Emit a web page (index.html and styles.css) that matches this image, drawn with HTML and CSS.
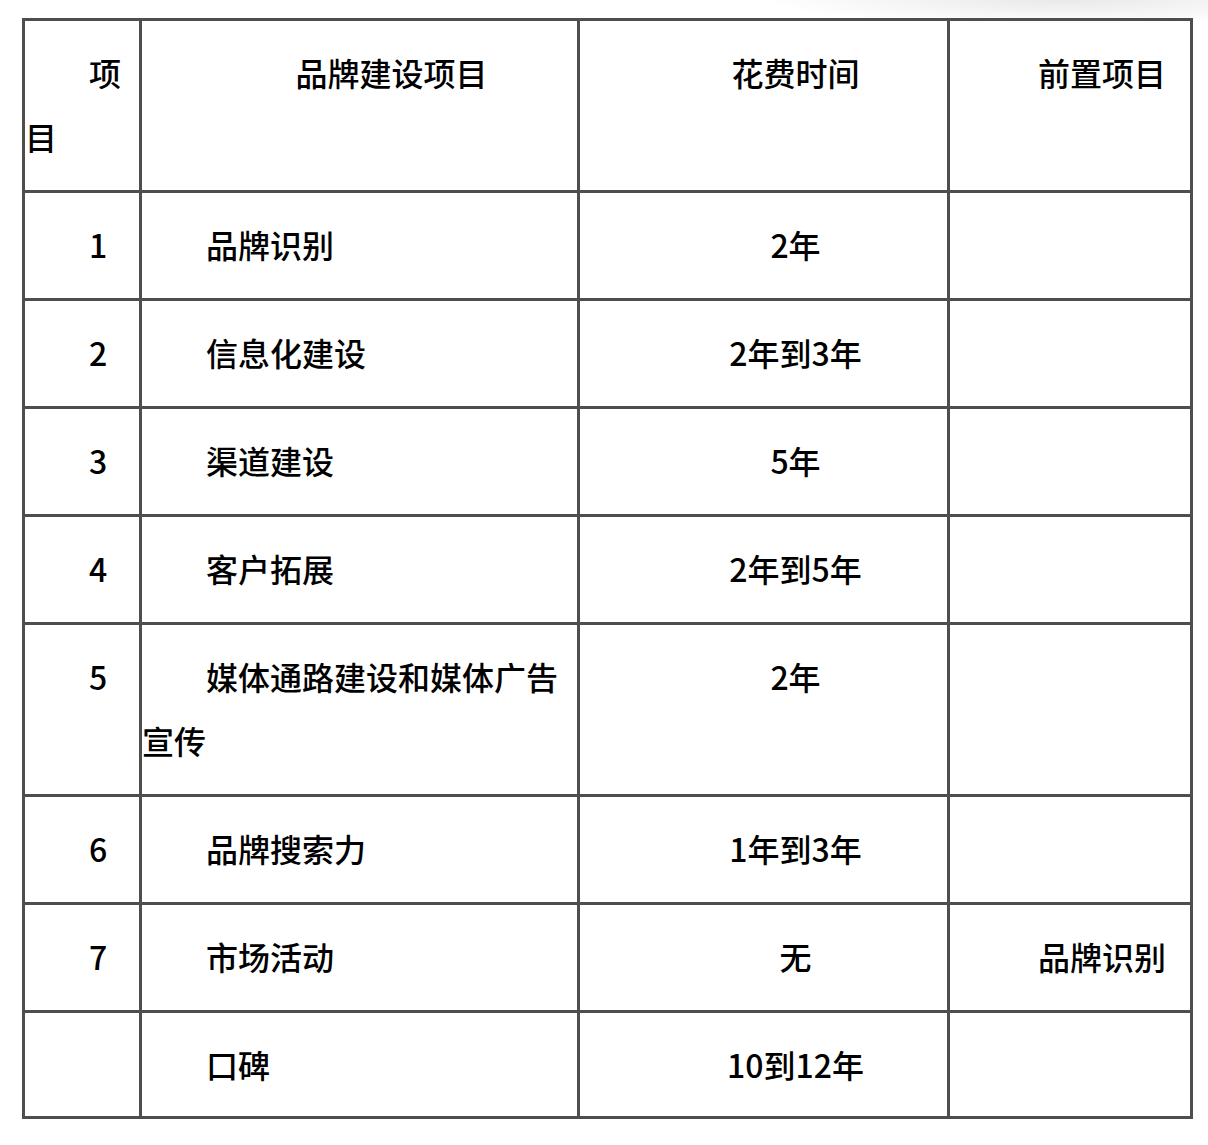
FILE: index.html
```html
<!DOCTYPE html>
<html lang="zh-CN">
<head>
<meta charset="utf-8">
<title>品牌建设项目</title>
<link rel="stylesheet" href="styles.css">
</head>
<body>
<table class="plan">
  <colgroup>
    <col class="c-no">
    <col class="c-name">
    <col class="c-time">
    <col class="c-pre">
  </colgroup>
  <tr>
    <td class="left"><p>项目</p></td>
    <td class="center"><p>品牌建设项目</p></td>
    <td class="center"><p>花费时间</p></td>
    <td class="center"><p>前置项目</p></td>
  </tr>
  <tr>
    <td class="left"><p>1</p></td>
    <td class="left"><p>品牌识别</p></td>
    <td class="center"><p>2年</p></td>
    <td class="center"><p></p></td>
  </tr>
  <tr>
    <td class="left"><p>2</p></td>
    <td class="left"><p>信息化建设</p></td>
    <td class="center"><p>2年到3年</p></td>
    <td class="center"><p></p></td>
  </tr>
  <tr>
    <td class="left"><p>3</p></td>
    <td class="left"><p>渠道建设</p></td>
    <td class="center"><p>5年</p></td>
    <td class="center"><p></p></td>
  </tr>
  <tr>
    <td class="left"><p>4</p></td>
    <td class="left"><p>客户拓展</p></td>
    <td class="center"><p>2年到5年</p></td>
    <td class="center"><p></p></td>
  </tr>
  <tr>
    <td class="left"><p>5</p></td>
    <td class="left"><p>媒体通路建设和媒体广告宣传</p></td>
    <td class="center"><p>2年</p></td>
    <td class="center"><p></p></td>
  </tr>
  <tr>
    <td class="left"><p>6</p></td>
    <td class="left"><p>品牌搜索力</p></td>
    <td class="center"><p>1年到3年</p></td>
    <td class="center"><p></p></td>
  </tr>
  <tr>
    <td class="left"><p>7</p></td>
    <td class="left"><p>市场活动</p></td>
    <td class="center"><p>无</p></td>
    <td class="center"><p>品牌识别</p></td>
  </tr>
  <tr class="last">
    <td class="left"><p></p></td>
    <td class="left"><p>口碑</p></td>
    <td class="center"><p>10到12年</p></td>
    <td class="center"><p></p></td>
  </tr>
</table>
</body>
</html>
```

FILE: styles.css
```css
html {
  background: radial-gradient(ellipse 300px 24px at 88% 0, #e9e9e9 0%, rgba(255,255,255,0) 100%) no-repeat, #ffffff;
}

body {
  margin: 0;
  padding: 18px 0 0 22px;
  font-family: "Noto Sans CJK SC", "Noto Sans", sans-serif;
  font-weight: 500;
  color: #000;
}

.plan {
  border-collapse: collapse;
  table-layout: fixed;
  width: 1171px;
  border: 3px solid #4e4e4e;
}

.c-no { width: 117px; }
.c-name { width: 438px; }
.c-time { width: 370px; }
.c-pre { width: 243px; }

.plan td {
  border: 3px solid #4e4e4e;
  padding: 19px 0 22px;
  vertical-align: top;
  font-size: 32px;
  line-height: 64px;
}

.plan p {
  margin: 0;
  min-height: 64px;
  text-indent: 2em;
}

.plan .left p { text-align: left; }
.plan .center p { text-align: center; }

.plan tr.last td {
  padding-bottom: 20px;
}
```
